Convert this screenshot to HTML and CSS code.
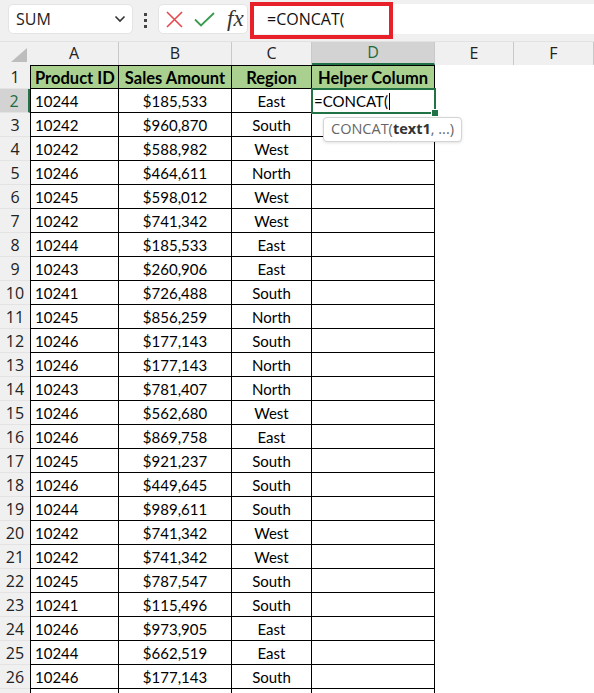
FILE: index.html
```html
<!DOCTYPE html>
<html lang="en">
<head>
  <meta charset="UTF-8" />
  <title>Book1 - Excel</title>
  <link rel="stylesheet" href="styles.css">
</head>
<body>
  <div class="toolbar">
    <div class="namebox">
      <span>SUM</span>
      <svg class="chevron" width="12" height="8" viewBox="0 0 12 8"><polyline points="1.5,1.5 6,6 10.5,1.5" fill="none" stroke="#333" stroke-width="1.6"/></svg>
    </div>
    <div class="grip"><i></i><i></i><i></i></div>
    <div class="fxbox">
      <svg class="cancel" width="17" height="17" viewBox="0 0 17 17"><path d="M1 1 L16 16 M16 1 L1 16" stroke="#e5484d" stroke-width="1.6" fill="none"/></svg>
      <svg class="enter" width="21" height="15" viewBox="0 0 21 15"><polyline points="1,7.5 7,13.5 20,1" fill="none" stroke="#3a9a4e" stroke-width="1.8"/></svg>
      <span class="fx">fx</span>
    </div>
    <div class="formula">
      <span class="formula-text">=CONCAT(</span>
      <div class="mark"></div>
    </div>
  </div>

  <div class="sheet">
    <div class="grid" id="grid"></div>
    <div class="tip">CONCAT(<b>text1</b>, ...)</div>
  </div>

  <script>
    // данные таблицы: ID, сумма, регион
    const rows = [
      ["10244", "$185,533", "East"],
      ["10242", "$960,870", "South"],
      ["10242", "$588,982", "West"],
      ["10246", "$464,611", "North"],
      ["10245", "$598,012", "West"],
      ["10242", "$741,342", "West"],
      ["10244", "$185,533", "East"],
      ["10243", "$260,906", "East"],
      ["10241", "$726,488", "South"],
      ["10245", "$856,259", "North"],
      ["10246", "$177,143", "South"],
      ["10246", "$177,143", "North"],
      ["10243", "$781,407", "North"],
      ["10246", "$562,680", "West"],
      ["10246", "$869,758", "East"],
      ["10245", "$921,237", "South"],
      ["10246", "$449,645", "South"],
      ["10244", "$989,611", "South"],
      ["10242", "$741,342", "West"],
      ["10242", "$741,342", "West"],
      ["10245", "$787,547", "South"],
      ["10241", "$115,496", "South"],
      ["10246", "$973,905", "East"],
      ["10244", "$662,519", "East"],
      ["10246", "$177,143", "South"],
      ["", "", ""]
    ];

    const grid = document.getElementById("grid");

    function cell(cls, text) {
      const d = document.createElement("div");
      d.className = cls;
      d.textContent = text;
      grid.appendChild(d);
      return d;
    }

    // шапка с буквами колонок
    const corner = cell("corner", "");
    corner.innerHTML = '<svg width="16" height="14" viewBox="0 0 16 14"><polygon points="16,0 16,14 0,14" fill="#bdbdbd"/></svg>';
    ["A", "B", "C", "D", "E", "F"].forEach(l => cell(l === "D" ? "col sel" : "col", l));

    // строка 1 - заголовки
    cell("rh", "1");
    cell("c a h", "Product ID");
    cell("c h", "Sales Amount");
    cell("c h", "Region");
    cell("c h", "Helper Column");
    cell("e", "");
    cell("e", "");

    rows.forEach((r, i) => {
      const n = i + 2;
      // последняя строка видна только краем, без подписей
      const label = r[0] ? String(n) : "";
      cell(n === 2 ? "rh sel" : "rh", label);
      cell("c a", r[0]);
      cell("c", r[1]);
      cell("c", r[2]);
      if (n === 2) {
        const d = cell("c active", "");
        d.innerHTML = '=CONCAT(<span class="caret"></span><span class="handle"></span>';
      } else {
        cell("c", "");
      }
      cell("e", "");
      cell("e", "");
    });
  </script>
</body>
</html>
```

FILE: styles.css
```css
body {
  margin: 0;
  background: #fff;
  overflow: hidden;
  font-family: Lato, "Liberation Sans", sans-serif;
}

/* Строка формул */
.toolbar {
  display: flex;
  align-items: flex-start;
  height: 42px;
  padding: 4px 0 0 8px;
  box-sizing: border-box;
  background: #f0f0f0;
  border-bottom: 1px solid #e2e2e2;
  font-family: "Open Sans", sans-serif;
}

.namebox {
  display: flex;
  align-items: center;
  justify-content: space-between;
  width: 125px;
  height: 30px;
  padding: 0 6px 0 7px;
  box-sizing: border-box;
  background: #fff;
  border: 1px solid #e4e4e4;
  border-radius: 5px;
  font-size: 16px;
  color: #222;
}

.grip {
  display: flex;
  flex-direction: column;
  gap: 3px;
  margin: 9px 11px 0 11px;
}

.grip i {
  display: block;
  width: 3px;
  height: 3px;
  background: #444;
}

.fxbox {
  display: flex;
  align-items: center;
  width: 90px;
  height: 30px;
  padding-left: 7px;
  box-sizing: border-box;
  background: #fff;
  border: 1px solid #e4e4e4;
  border-radius: 5px;
}

.fxbox .enter {
  margin-left: 11px;
}

.fx {
  margin-left: 12px;
  font-family: "Liberation Serif", serif;
  font-style: italic;
  font-size: 23px;
  color: #333;
  line-height: 1;
  padding-bottom: 2px;
}

.formula {
  position: relative;
  flex: 1;
  height: 30px;
  margin-left: 3px;
  background: #fff;
  font-size: 16px;
  line-height: 30px;
  color: #111;
}

.formula-text {
  padding-left: 16px;
}

/* красная рамка-выделение */
.mark {
  position: absolute;
  left: -1px;
  top: -2px;
  width: 143px;
  height: 37px;
  border: 4px solid #e8202a;
  box-sizing: border-box;
}

/* Лист */
.sheet {
  position: relative;
}

.grid {
  display: grid;
  grid-template-columns: 30px 89px 113px 80px 123px 79px 1fr;
  grid-template-rows: 23px;
  grid-auto-rows: 24px;
}

.corner,
.col {
  background: #f0f0f0;
  border-right: 1px solid #c9c9c9;
  box-sizing: border-box;
  font-family: "Open Sans", sans-serif;
  font-size: 16px;
  line-height: 23px;
  text-align: center;
  color: #222;
}

.corner {
  display: flex;
  align-items: flex-end;
  justify-content: flex-end;
  padding: 0 3px 3px 0;
  border-right: none;
}

.corner svg {
  display: block;
}

.col.sel {
  background: #d3d3d3;
  color: #1b6b3e;
  border-bottom: 2px solid #217346;
  line-height: 21px;
}

.rh {
  background: #f0f0f0;
  border-bottom: 1px solid #e3e3e3;
  box-sizing: border-box;
  font-family: "Open Sans", sans-serif;
  font-size: 16px;
  line-height: 24px;
  text-align: center;
  color: #222;
}

.rh.sel {
  background: #d3d3d3;
  color: #1b6b3e;
  border-right: 2px solid #217346;
}

.c {
  border-right: 1px solid #000;
  border-bottom: 1px solid #000;
  box-sizing: border-box;
  font-size: 15px;
  line-height: 25px;
  text-align: center;
  white-space: nowrap;
  color: #000;
}

.c.a {
  border-left: 1px solid #000;
  text-align: left;
  padding-left: 4px;
}

.c.h {
  background: #a9d08e;
  border-top: 1px solid #000;
  font-size: 16.5px;
  font-weight: bold;
  line-height: 24px;
}

.c.active {
  position: relative;
  text-align: left;
  padding-left: 2px;
}

/* рамка активной ячейки */
.c.active::after {
  content: "";
  position: absolute;
  left: -1px;
  top: -1px;
  right: -2px;
  bottom: -2px;
  border: 2px solid #217346;
}

.caret {
  display: inline-block;
  width: 1px;
  height: 17px;
  margin-left: 1px;
  vertical-align: -3px;
  background: #000;
}

.handle {
  position: absolute;
  right: -5px;
  bottom: -5px;
  width: 6px;
  height: 6px;
  background: #217346;
  border: 1px solid #fff;
  z-index: 1;
}

.e {
  background: #fff;
}

/* подсказка функции */
.tip {
  position: absolute;
  left: 323px;
  top: 75px;
  height: 23px;
  padding: 0 7px;
  background: #fff;
  border: 1px solid #d4d4d4;
  border-radius: 4px;
  box-shadow: 0 1px 3px rgba(0, 0, 0, 0.12);
  font-family: "Open Sans", sans-serif;
  font-size: 14.5px;
  line-height: 22px;
  color: #666;
  white-space: nowrap;
}

.tip b {
  color: #333;
}
```
